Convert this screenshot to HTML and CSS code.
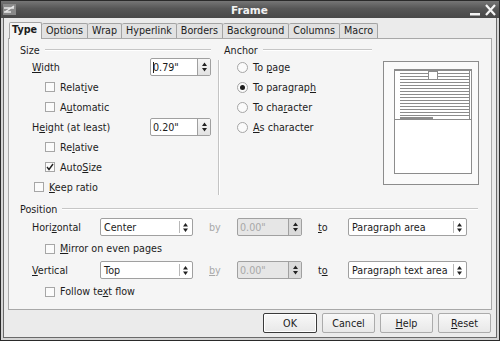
FILE: index.html
```html
<!DOCTYPE html>
<html lang="en">
<head>
  <meta charset="UTF-8">
  <title>Frame</title>
  <link rel="stylesheet" href="styles.css">
</head>
<body>
  <div class="window">
    <div class="titlebar">
      <svg class="win-icon" width="13" height="11" viewBox="0 0 13 11">
        <rect x="0" y="0" width="13" height="11" fill="#8a8a8a"/>
        <path d="M1 4H11M2 8L11 2M1 8H8" stroke="#e8e8e8" stroke-width="1.4" fill="none"/>
      </svg>
      <span class="title">Frame</span>
      <span class="win-btns">
        <svg width="12" height="12" viewBox="0 0 12 12"><rect x="1" y="9" width="10" height="2.5" fill="#f4f4f4"/></svg>
        <svg width="13" height="12" viewBox="0 0 13 12"><path d="M2 1L11 11M11 1L2 11" stroke="#f4f4f4" stroke-width="2.2"/></svg>
      </span>
    </div>

    <div class="body">
      <div class="tabs">
        <div class="tab active">Type</div>
        <div class="tab">Options</div>
        <div class="tab">Wrap</div>
        <div class="tab">Hyperlink</div>
        <div class="tab">Borders</div>
        <div class="tab">Background</div>
        <div class="tab">Columns</div>
        <div class="tab">Macro</div>
      </div>

      <div class="panel">
        <div class="top">
          <div class="group size">
            <div class="legend"><span>Size</span></div>
            <div class="row field-row">
              <span class="lbl"><u>W</u>idth</span>
              <div class="spin">
                <span class="spin-text"><i class="caret"></i>0.79"</span>
                <span class="spin-btn"><svg width="5" height="10" viewBox="0 0 5 10"><path d="M2.5 0.5L5 4H0zM0 6H5L2.5 9.5z"/></svg></span>
              </div>
            </div>
            <div class="row sub"><span class="check"></span><span>Relat<u>i</u>ve</span></div>
            <div class="row sub"><span class="check"></span><span>A<u>u</u>tomatic</span></div>
            <div class="row field-row">
              <span class="lbl">H<u>e</u>ight (at least)</span>
              <div class="spin">
                <span class="spin-text">0.20"</span>
                <span class="spin-btn"><svg width="5" height="10" viewBox="0 0 5 10"><path d="M2.5 0.5L5 4H0zM0 6H5L2.5 9.5z"/></svg></span>
              </div>
            </div>
            <div class="row sub"><span class="check"></span><span>Re<u>l</u>ative</span></div>
            <div class="row sub"><span class="check checked"><svg width="8" height="8" viewBox="0 0 8 8"><path d="M1 4L3 6.5L7 1" stroke="#222" stroke-width="1.4" fill="none"/></svg></span><span>Auto<u>S</u>ize</span></div>
            <div class="row keep"><span class="check"></span><span><u>K</u>eep ratio</span></div>
          </div>

          <div class="vsep"></div>

          <div class="group anchor">
            <div class="legend"><span>Anchor</span></div>
            <div class="row radio-row"><span class="radio"></span><span>To <u>p</u>age</span></div>
            <div class="row radio-row"><span class="radio on"></span><span>To paragrap<u>h</u></span></div>
            <div class="row radio-row"><span class="radio"></span><span>To cha<u>r</u>acter</span></div>
            <div class="row radio-row"><span class="radio"></span><span><u>A</u>s character</span></div>
          </div>

          <div class="preview">
            <svg width="96" height="124" viewBox="0 0 96 124">
              <rect x="0.5" y="0.5" width="95" height="123" fill="#fafafa" stroke="#8c8c8c"/>
              <rect x="11.5" y="8.5" width="77" height="104" fill="#fff" stroke="#8c8c8c"/>
              <rect x="11" y="8" width="78" height="2" fill="#8c8c8c"/>
              <g stroke="#8c8c8c" stroke-width="1">
                <path d="M17 12.5H86M17 15.5H86M17 18.5H86M17 21.5H86M17 24.5H86M17 27.5H86M17 30.5H86M17 33.5H86M17 36.5H86M17 39.5H86M17 42.5H86M17 45.5H86M17 48.5H86M17 51.5H86M17 54.5H86"/>
                <path d="M86.5 10V58"/>
                <path d="M11 58.5H89"/>
              </g>
              <rect x="17" y="56" width="33" height="2" fill="#8c8c8c"/>
              <rect x="45.5" y="10.5" width="9" height="8" fill="#fff" stroke="#8c8c8c"/>
            </svg>
          </div>
        </div>

        <div class="group position">
          <div class="legend"><span>Position</span></div>
          <div class="row pos-row">
            <span class="pos-lbl">Hori<u>z</u>ontal</span>
            <div class="select sel-a">
              <span class="sel-text">Center</span>
              <span class="sel-arrow"><svg width="5" height="9" viewBox="0 0 5 9"><path d="M2.5 0L5 3.5H0zM0 5.5H5L2.5 9z"/></svg></span>
            </div>
            <span class="by">by</span>
            <div class="spin disabled">
              <span class="spin-text">0.00"</span>
              <span class="spin-btn"><svg width="5" height="10" viewBox="0 0 5 10"><path d="M2.5 0.5L5 4H0zM0 6H5L2.5 9.5z"/></svg></span>
            </div>
            <span class="to"><u>t</u>o</span>
            <div class="select sel-b">
              <span class="sel-text">Paragraph area</span>
              <span class="sel-arrow"><svg width="5" height="9" viewBox="0 0 5 9"><path d="M2.5 0L5 3.5H0zM0 5.5H5L2.5 9z"/></svg></span>
            </div>
          </div>
          <div class="row sub mirror"><span class="check"></span><span><u>M</u>irror on even pages</span></div>
          <div class="row pos-row">
            <span class="pos-lbl"><u>V</u>ertical</span>
            <div class="select sel-a">
              <span class="sel-text">Top</span>
              <span class="sel-arrow"><svg width="5" height="9" viewBox="0 0 5 9"><path d="M2.5 0L5 3.5H0zM0 5.5H5L2.5 9z"/></svg></span>
            </div>
            <span class="by"><u>b</u>y</span>
            <div class="spin disabled">
              <span class="spin-text">0.00"</span>
              <span class="spin-btn"><svg width="5" height="10" viewBox="0 0 5 10"><path d="M2.5 0.5L5 4H0zM0 6H5L2.5 9.5z"/></svg></span>
            </div>
            <span class="to">t<u>o</u></span>
            <div class="select sel-b">
              <span class="sel-text">Paragraph text area</span>
              <span class="sel-arrow"><svg width="5" height="9" viewBox="0 0 5 9"><path d="M2.5 0L5 3.5H0zM0 5.5H5L2.5 9z"/></svg></span>
            </div>
          </div>
          <div class="row sub follow"><span class="check"></span><span>Follow te<u>x</u>t flow</span></div>
        </div>
      </div>

      <div class="buttons">
        <button class="btn default">OK</button>
        <button class="btn">Cancel</button>
        <button class="btn"><u>H</u>elp</button>
        <button class="btn"><u>R</u>eset</button>
      </div>
    </div>
  </div>
</body>
</html>
```

FILE: styles.css
```css
* {
  box-sizing: border-box;
}
body {
  margin: 0;
  font-family: 'DejaVu Sans', sans-serif;
  font-size: 9.6px;
  color: #1c1c1c;
  background: #2c2c2c;
}
u {
  text-decoration: underline;
  text-underline-offset: 1px;
}
.window {
  width: 500px;
  height: 341px;
  border: 1px solid #2a2a2a;
  background: #d4d4d4;
  display: flex;
  flex-direction: column;
}
.titlebar {
  height: 17px;
  flex: none;
  display: flex;
  align-items: center;
  padding: 0 2px 0 2px;
  background: linear-gradient(#767676, #565656 45%, #484848);
}
.win-icon {
  flex: none;
}
.title {
  flex: 1;
  text-align: center;
  color: #f2f2f2;
  font-weight: bold;
  font-size: 10.5px;
  padding-left: 14px;
}
.win-btns {
  display: flex;
  gap: 3px;
  align-items: center;
}
.body {
  flex: 1;
  margin: 0 2px 2px 2px;
  border: 1px solid #6a6a6a;
  border-top: none;
  background: #ebebeb;
  padding: 0 4px;
  display: flex;
  flex-direction: column;
}

/* tabs */
.tabs {
  height: 20px;
  display: flex;
  align-items: flex-end;
  padding-left: 1px;
}
.tab {
  height: 15px;
  line-height: 14px;
  padding: 0 4px;
  border: 1px solid #a4a4a4;
  border-bottom: none;
  border-left: none;
  background: #e2e2e2;
  border-radius: 2px 2px 0 0;
}
.tab.active {
  height: 17px;
  margin-bottom: -1px;
  border-left: 1px solid #a4a4a4;
  background: #f5f5f5;
  font-weight: bold;
  position: relative;
  z-index: 1;
  padding: 0 4px 0 2px;
}

/* panel */
.panel {
  height: 272px;
  border: 1px solid #a8a8a8;
  background: #f5f5f5;
  padding: 4px 0 0 11px;
}
.top {
  display: flex;
  align-items: flex-start;
}
.group {
  display: flex;
  flex-direction: column;
}
.size {
  width: 191px;
}
.anchor {
  width: 148px;
  margin-left: 4px;
}
.legend {
  height: 14px;
  display: flex;
  align-items: center;
}
.legend::after {
  content: "";
  flex: 1;
  margin-left: 5px;
  border-top: 1px solid #c6c6c6;
  border-bottom: 1px solid #fff;
}
.row {
  height: 20px;
  display: flex;
  align-items: center;
  white-space: nowrap;
}
.field-row {
  padding-left: 12px;
  justify-content: space-between;
}
.sub {
  padding-left: 25px;
}
.keep {
  padding-left: 14px;
}
.radio-row {
  padding-left: 13px;
}
.vsep {
  width: 2px;
  height: 135px;
  margin: 17px 0 0 7px;
  border-left: 1px solid #c4c4c4;
  border-right: 1px solid #fff;
}
.preview {
  margin: 18px 0 0 11px;
  height: 124px;
}
.preview svg {
  display: block;
}

/* controls */
.check {
  width: 10px;
  height: 10px;
  border: 1px solid #a6a6a6;
  background: #fbfbfb;
  margin-right: 5px;
  display: flex;
  align-items: center;
  justify-content: center;
}
.radio {
  width: 11px;
  height: 11px;
  border: 1px solid #a6a6a6;
  border-radius: 50%;
  background: #fbfbfb;
  margin-right: 5px;
  display: flex;
  align-items: center;
  justify-content: center;
}
.radio.on::after {
  content: "";
  width: 5px;
  height: 5px;
  border-radius: 50%;
  background: #1c1c1c;
}
.spin {
  width: 61px;
  height: 18px;
  border: 1px solid #a0a0a0;
  border-radius: 2px;
  background: #fff;
  display: flex;
}
.spin-text {
  flex: 1;
  padding-left: 2px;
  display: flex;
  align-items: center;
}
.caret {
  width: 1px;
  height: 11px;
  background: #222;
  margin-right: -1px;
}
.spin-btn {
  width: 13px;
  border-left: 1px solid #a0a0a0;
  background: linear-gradient(#f6f6f6, #e2e2e2);
  display: flex;
  align-items: center;
  justify-content: center;
}
.spin-btn svg,
.sel-arrow svg {
  fill: #222;
}
.spin.disabled {
  width: 65px;
  background: #e6e6e6;
  color: #a8a8a8;
}
.spin.disabled .spin-btn {
  background: #dadada;
}

/* position */
.position {
  width: 458px;
  margin-top: 5px;
}
.pos-row {
  height: 22px;
  padding-left: 12px;
}
.pos-lbl {
  width: 68px;
}
.select {
  height: 18px;
  border: 1px solid #a0a0a0;
  border-radius: 2px;
  background: #fff;
  display: flex;
  align-items: center;
}
.sel-a {
  width: 93px;
}
.sel-b {
  width: 119px;
}
.sel-text {
  flex: 1;
  padding-left: 3px;
}
.sel-arrow {
  width: 11px;
  height: 12px;
  border-left: 1px solid #b8b8b8;
  display: flex;
  align-items: center;
  justify-content: center;
  margin-right: 2px;
}
.by {
  width: 44px;
  padding-left: 16px;
  color: #a8a8a8;
}
.to {
  width: 46px;
  padding-left: 16px;
}
.mirror,
.follow {
  height: 21px;
}

/* buttons */
.buttons {
  display: flex;
  justify-content: flex-end;
  gap: 5px;
  margin-top: 3px;
  padding-right: 1px;
}
.btn {
  width: 53px;
  height: 20px;
  font-family: inherit;
  font-size: inherit;
  color: #1c1c1c;
  border: 1px solid #ababab;
  border-radius: 2px;
  background: linear-gradient(#f8f8f8, #e8e8e8);
  padding: 0;
}
.btn.default {
  width: 54px;
  border: 1px solid #3a3a3a;
  box-shadow: inset 0 0 0 1px #fff;
}
```
